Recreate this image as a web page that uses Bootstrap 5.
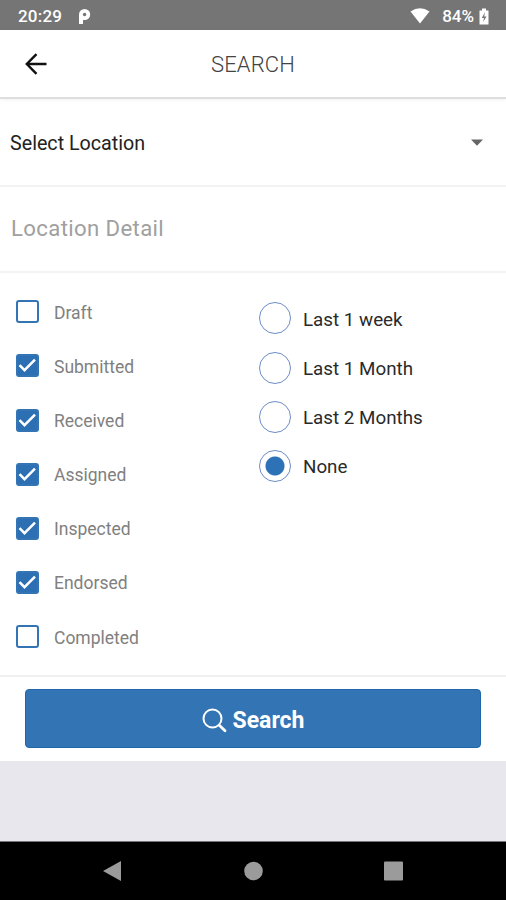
<!DOCTYPE html>
<html lang="en">
<head>
<meta charset="utf-8">
<meta name="viewport" content="width=device-width, initial-scale=1">
<title>Search</title>
<link href="https://cdn.jsdelivr.net/npm/bootstrap@5.3.0/dist/css/bootstrap.min.css" rel="stylesheet">
<style>
  :root { --brand: #3374b5; --line: #f3f3f4; }
  body { font-family: Roboto, "Liberation Sans", sans-serif; height: 900px; background: #e8e7ed; line-height: 1.2; }
  .status-bar { height: 30px; background: #757575; padding: 2px 16px 0 18px; font-size: 17px; font-weight: 500; letter-spacing: .2px; }
  .battery-text { letter-spacing: 0; margin-left: 12px; }
  .app-bar { height: 69px; padding: 0 25px; border-bottom: 2px solid #dedede; box-shadow: 0 1px 3px rgba(0,0,0,.06); z-index: 1; }
  .app-title { font-size: 22px; color: #444; font-weight: 300; padding-top: 4px; letter-spacing: .15px; }
  .app-side { width: 22px; }
  .field-row { border-bottom: 2px solid var(--line); padding: 0 23px 0 10px; }
  .location-row { height: 88px; font-size: 19.7px; color: #222; }
  .location-row span { padding-top: 3px; }
  .detail-row { height: 86px; }
  .detail-row .form-control { font-size: 22.2px; padding: 0 0 2px 1px; letter-spacing: .35px; line-height: 1.2; }
  .detail-row .form-control::placeholder { color: #a0a0a0; opacity: 1; }
  .filters { height: 404px; border-bottom: 2px solid #efeff0; }
  .status-list { width: 259px; padding: 11.7px 0 0 16px; }
  .status-item { height: 54.15px; gap: 15px; font-size: 17.5px; color: #808080; }
  .status-item span { padding-top: 3px; }
  .status-item .form-check-input { width: 23px; height: 23px; border: 2px solid var(--brand); border-radius: 3px; background-size: 23px; background-position: center; }
  .status-item .form-check-input:checked { background-color: #2d6fb3; background-image: url("data:image/svg+xml,%3csvg xmlns='http://www.w3.org/2000/svg' viewBox='0 0 23 23'%3e%3cpath d='M3.500 11.200 8.500 16.200 19 5.700' fill='none' stroke='%23fff' stroke-width='2.500'/%3e%3c/svg%3e"); }
  .period-list { padding-top: 20.8px; }
  .period-item { height: 49.2px; gap: 12px; font-size: 18.8px; color: #2a2a2a; }
  .period-item span { padding-top: 3px; }
  .period-item .form-check-input { width: 32px; height: 32px; border: 1.5px solid #6c8dc8; background: #fff; }
  .period-item .form-check-input:checked { background: radial-gradient(circle, #2d71b6 9px, #fff 10px); }
  .actions { height: 84px; padding: 12px 25px 0; }
  .search-btn { --bs-btn-bg: var(--brand); --bs-btn-border-color: #1f66aa; --bs-btn-color: #fff; --bs-btn-padding-y: 0; height: 59px; border-radius: 4px; font-size: 23px; font-weight: 700; gap: 6px; }
  .search-btn span { padding-top: 3px; line-height: 1; }
  .search-btn svg { margin-top: 3px; }
  .system-nav { height: 59px; border-top: 1px solid #777; padding: 0 102px; }
</style>
</head>
<body class="d-flex flex-column overflow-hidden">
  <div class="status-bar d-flex align-items-center text-white flex-shrink-0">
    <span>20:29</span>
    <svg class="ms-3" width="13" height="17" viewBox="0 0 13 17"><path d="M1 16V6.500a5.600 5.600 0 1 1 5.600 5.600H5V16z" fill="#fff"/><circle cx="6.600" cy="6.500" r="1.700" fill="#757575"/></svg>
    <svg class="ms-auto" width="20" height="16" viewBox="0 0 20 16"><path d="M.5 3.500Q10-2.800 19.500 3.500L10 15.500z" fill="#fff"/></svg>
    <span class="battery-text">84%</span>
    <svg class="ms-1" width="12" height="17" viewBox="0 0 12 17"><path d="M4 .5h4v2h2.500v14h-9v-14H4z" fill="#fff"/><path d="M7 4 3.800 10H6l-.8 4L8.500 8.500H6.200z" fill="#757575"/></svg>
  </div>

  <header class="app-bar d-flex align-items-center justify-content-between bg-white flex-shrink-0 position-relative">
    <svg class="app-side" height="22" viewBox="0 0 22 22" fill="none" stroke="#111" stroke-width="2.400"><path d="M21.500 11H2M11.500 1.200 1.800 11l9.700 9.800"/></svg>
    <h1 class="app-title mb-0">SEARCH</h1>
    <span class="app-side"></span>
  </header>

  <main class="bg-white flex-shrink-0">
    <div class="field-row location-row d-flex align-items-center justify-content-between">
      <span>Select Location</span>
      <svg width="12" height="7" viewBox="0 0 12 7"><path d="M0 .5h12L6 6.800z" fill="#666"/></svg>
    </div>
    <div class="field-row detail-row d-flex align-items-center">
      <input class="form-control border-0 shadow-none bg-transparent" type="text" placeholder="Location Detail" aria-label="Location Detail">
    </div>

    <div class="filters d-flex align-items-start">
      <div class="status-list">
        <label class="status-item d-flex align-items-center"><input class="form-check-input m-0" type="checkbox"><span>Draft</span></label>
        <label class="status-item d-flex align-items-center"><input class="form-check-input m-0" type="checkbox" checked><span>Submitted</span></label>
        <label class="status-item d-flex align-items-center"><input class="form-check-input m-0" type="checkbox" checked><span>Received</span></label>
        <label class="status-item d-flex align-items-center"><input class="form-check-input m-0" type="checkbox" checked><span>Assigned</span></label>
        <label class="status-item d-flex align-items-center"><input class="form-check-input m-0" type="checkbox" checked><span>Inspected</span></label>
        <label class="status-item d-flex align-items-center"><input class="form-check-input m-0" type="checkbox" checked><span>Endorsed</span></label>
        <label class="status-item d-flex align-items-center"><input class="form-check-input m-0" type="checkbox"><span>Completed</span></label>
      </div>
      <div class="period-list">
        <label class="period-item d-flex align-items-center"><input class="form-check-input m-0" type="radio" name="period"><span>Last 1 week</span></label>
        <label class="period-item d-flex align-items-center"><input class="form-check-input m-0" type="radio" name="period"><span>Last 1 Month</span></label>
        <label class="period-item d-flex align-items-center"><input class="form-check-input m-0" type="radio" name="period"><span>Last 2 Months</span></label>
        <label class="period-item d-flex align-items-center"><input class="form-check-input m-0" type="radio" name="period" checked><span>None</span></label>
      </div>
    </div>

    <div class="actions">
      <button class="btn search-btn w-100 d-flex align-items-center justify-content-center" type="button">
        <svg width="25" height="25" viewBox="0 0 25 25" fill="none" stroke="#fff" stroke-linecap="round"><circle cx="10.500" cy="10.500" r="9" stroke-width="2"/><path d="m17.500 17.500 5.500 5.300" stroke-width="2.800"/></svg>
        <span>Search</span>
      </button>
    </div>
  </main>

  <nav class="system-nav d-flex align-items-center justify-content-between bg-black mt-auto flex-shrink-0">
    <svg width="20" height="22" viewBox="0 0 20 22"><path d="M1 11 19 1v20z" fill="#9b9b9b"/></svg>
    <svg width="20" height="20" viewBox="0 0 20 20"><circle cx="10.500" cy="10" r="9.300" fill="#9b9b9b"/></svg>
    <svg width="20" height="20" viewBox="0 0 20 20"><rect x="0" y=".5" width="19" height="19" rx="1" fill="#9b9b9b"/></svg>
  </nav>
<script src="https://cdn.jsdelivr.net/npm/bootstrap@5.3.0/dist/js/bootstrap.bundle.min.js"></script>
</body>
</html>
